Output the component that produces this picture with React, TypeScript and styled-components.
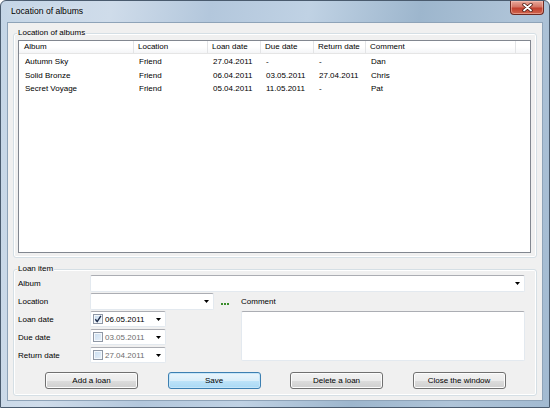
import styled, { createGlobalStyle } from 'styled-components'

const GlobalStyle = createGlobalStyle`
  html, body {
    margin: 0;
    padding: 0;
    background: #ffffff;
  }
  body {
    font-family: 'Liberation Sans', Arial, sans-serif;
    font-size: 8px;
    color: #000000;
  }
`

const Window = styled.div`
  width: 550px;
  height: 408px;
  box-sizing: border-box;
  display: flex;
  flex-direction: column;
  padding: 0 6px 6px;
  border: 1px solid #4a5b6e;
  border-radius: 6px 6px 0 0;
  background: linear-gradient(100deg, #c4d5e6 0%, #cfdcea 18%, #b3c7dc 34%, #c0d2e4 50%, #9db6cd 68%, #afc4d8 84%, #a2bad1 100%);
  overflow: hidden;
`

const TitleBar = styled.div`
  height: 21px;
  display: flex;
  justify-content: space-between;
  align-items: flex-start;
`

const Title = styled.div`
  margin-left: 4px;
  line-height: 21px;
  font-size: 8.6px;
  color: #000000;
  text-shadow: 0 0 6px rgba(255, 255, 255, 0.9);
`

const CloseButton = styled.div`
  width: 34px;
  height: 14px;
  margin-right: -1px;
  box-sizing: border-box;
  display: flex;
  align-items: center;
  justify-content: center;
  border: 1px solid #6e2a22;
  border-top: none;
  border-radius: 0 0 4px 4px;
  background: linear-gradient(#e9a99b 0%, #d47565 45%, #c2402e 55%, #d0664f 100%);
  box-shadow: inset 0 0 0 1px rgba(255, 210, 200, 0.45);
`

const Client = styled.div`
  flex: 1;
  display: flex;
  flex-direction: column;
  padding: 10px 5px 0;
  background: #f0f0f0;
  border: 1px solid #8ea3b8;
`

const GroupBox = styled.div<{ $top?: number }>`
  position: relative;
  margin-top: ${p => p.$top ?? 0}px;
  border: 1px solid #d5dfe5;
  border-radius: 3px;
  box-shadow: inset 0 0 0 1px #ffffff;
`

const Legend = styled.span`
  position: absolute;
  left: 3px;
  top: -6px;
  padding: 0 1px;
  line-height: 10px;
  background: #f0f0f0;
`

const ListGroup = styled(GroupBox)`
  padding: 6px 5px 4px 4px;
`

const ListView = styled.div`
  height: 213px;
  box-sizing: border-box;
  border: 1px solid #828790;
  background: #ffffff;
`

const columns = '115px 74px 53px 53px 52px 150px 1fr'

const HeaderRow = styled.div`
  display: grid;
  grid-template-columns: ${columns};
  height: 13px;
  box-sizing: border-box;
  border-bottom: 1px solid #e5e5e5;
  background: linear-gradient(#ffffff 0%, #ffffff 50%, #f4f5f7 100%);
`

const HeaderCell = styled.div`
  padding-left: 4px;
  line-height: 12px;
  border-right: 1px solid #e3e4e6;
  white-space: nowrap;
  &:first-child {
    padding-left: 5px;
  }
  &:last-child {
    border-right: none;
  }
`

const Rows = styled.div`
  padding-top: 1px;
`

const Row = styled.div`
  display: grid;
  grid-template-columns: ${columns};
  height: 13.5px;
  line-height: 13.5px;
`

const Cell = styled.div`
  padding-left: 5px;
  white-space: nowrap;
  &:first-child {
    padding-left: 6px;
  }
`

const FormGroup = styled(GroupBox)`
  padding: 5px 4px 5px 4px;
`

const FormGrid = styled.div`
  display: grid;
  grid-template-columns: 72px 125px 26px 284px;
  grid-template-rows: repeat(5, 17px);
  row-gap: 1px;
`

const Label = styled.div`
  display: flex;
  align-items: center;
  white-space: nowrap;
`

const Field = styled.div<{ $span?: number; $width?: number }>`
  grid-column: span ${p => p.$span ?? 1};
  width: ${p => (p.$width ? `${p.$width}px` : 'auto')};
  height: 17px;
  box-sizing: border-box;
  display: flex;
  align-items: center;
  justify-content: flex-end;
  padding-right: 4px;
  background: #ffffff;
  border: 1px solid #e3e9ef;
  border-top-color: #abadb3;
  border-radius: 2px;
`

const Arrow = () => (
  <svg width="5" height="3" viewBox="0 0 5 3">
    <polygon points="0,0 5,0 2.5,3" fill="#000000" />
  </svg>
)

const Ellipsis = styled.div`
  display: flex;
  align-items: flex-end;
  gap: 1px;
  padding: 0 0 5px 6px;
`

const Dot = styled.span`
  width: 2px;
  height: 2px;
  background: #3a8d2c;
`

const CommentBox = styled.div`
  grid-column: 4;
  grid-row: 3 / span 3;
  height: 50px;
  box-sizing: border-box;
  background: #ffffff;
  border: 1px solid #e3e9ef;
  border-top-color: #abadb3;
  border-radius: 2px;
`

const DatePicker = styled.div`
  width: 76px;
  height: 16px;
  box-sizing: border-box;
  display: flex;
  align-items: center;
  padding: 0 4px 0 2px;
  background: #ffffff;
  border: 1px solid #e3e9ef;
  border-top-color: #abadb3;
  border-radius: 2px;
`

const CheckBox = styled.span`
  width: 10px;
  height: 10px;
  box-sizing: border-box;
  display: flex;
  align-items: center;
  justify-content: center;
  border: 1px solid #8f98a6;
  background: linear-gradient(135deg, #c9ddf0 0%, #e8f1fa 100%);
  box-shadow: inset 0 0 0 1px #f4f8fc;
`

const DateText = styled.span<{ $enabled: boolean }>`
  flex: 1;
  margin-left: 2px;
  color: ${p => (p.$enabled ? '#000000' : '#6d6d6d')};
`

const ButtonRow = styled.div`
  display: flex;
  gap: 29.5px;
  margin: 7.5px 0 1px 27px;
`

const Button = styled.div<{ $default?: boolean }>`
  width: 93px;
  height: 17px;
  box-sizing: border-box;
  display: flex;
  align-items: center;
  justify-content: center;
  border: 1px solid ${p => (p.$default ? '#3c7fb1' : '#707070')};
  border-radius: 3px;
  background: ${p =>
    p.$default
      ? 'linear-gradient(#eaf5fc 0%, #d9eefa 50%, #bee3f8 51%, #a9d9f5 100%)'
      : 'linear-gradient(#f2f2f2 0%, #ebebeb 50%, #dddddd 51%, #cfcfcf 100%)'};
  box-shadow: inset 0 0 0 1px ${p => (p.$default ? '#c6e6f9' : '#fcfcfc')};
`

const albums = [
  ['Autumn Sky', 'Friend', '27.04.2011', '-', '-', 'Dan'],
  ['Solid Bronze', 'Friend', '06.04.2011', '03.05.2011', '27.04.2011', 'Chris'],
  ['Secret Voyage', 'Friend', '05.04.2011', '11.05.2011', '-', 'Pat'],
]

const headers = ['Album', 'Location', 'Loan date', 'Due date', 'Return date', 'Comment', '']

const dates = [
  { label: 'Loan date', value: '06.05.2011', checked: true },
  { label: 'Due date', value: '03.05.2011', checked: false },
  { label: 'Return date', value: '27.04.2011', checked: false },
]

const DateLabel = styled(Label)<{ $row: number }>`
  grid-column: 1;
  grid-row: ${p => p.$row};
`

const DateCell = styled.div<{ $row: number }>`
  grid-column: 2;
  grid-row: ${p => p.$row};
`

function FormDateRow({ label, value, checked, index }: { label: string; value: string; checked: boolean; index: number }) {
  const row = index + 3
  return (
    <>
      <DateLabel $row={row}>{label}</DateLabel>
      <DateCell $row={row}>
        <DatePicker>
          <CheckBox>
            {checked && (
              <svg width="8" height="8" viewBox="0 0 8 8">
                <path d="M1.3 4.2 L3.2 6.6 L6.9 0.8" stroke="#1c2b4b" strokeWidth="1.4" fill="none" />
              </svg>
            )}
          </CheckBox>
          <DateText $enabled={checked}>{value}</DateText>
          <Arrow />
        </DatePicker>
      </DateCell>
    </>
  )
}

export default function App() {
  return (
    <>
      <GlobalStyle />
      <Window>
        <TitleBar>
          <Title>Location of albums</Title>
          <CloseButton>
            <svg width="11" height="9" viewBox="0 0 11 9">
              <path d="M2 1.5 L9 7.5 M9 1.5 L2 7.5" stroke="#4a1a12" strokeWidth="3.4" strokeLinecap="round" />
              <path d="M2 1.5 L9 7.5 M9 1.5 L2 7.5" stroke="#ffffff" strokeWidth="1.8" strokeLinecap="round" />
            </svg>
          </CloseButton>
        </TitleBar>
        <Client>
          <ListGroup>
            <Legend>Location of albums</Legend>
            <ListView>
              <HeaderRow>
                {headers.map((h, i) => (
                  <HeaderCell key={i}>{h}</HeaderCell>
                ))}
              </HeaderRow>
              <Rows>
                {albums.map(row => (
                  <Row key={row[0]}>
                    {row.map((c, i) => (
                      <Cell key={i}>{c}</Cell>
                    ))}
                  </Row>
                ))}
              </Rows>
            </ListView>
          </ListGroup>

          <FormGroup $top={11}>
            <Legend>Loan item</Legend>
            <FormGrid>
              <Label>Album</Label>
              <Field $span={3}>
                <Arrow />
              </Field>

              <Label>Location</Label>
              <Field $width={124}>
                <Arrow />
              </Field>
              <Ellipsis>
                <Dot />
                <Dot />
                <Dot />
              </Ellipsis>
              <Label>Comment</Label>

              {dates.map((d, i) => (
                <FormDateRow key={d.label} index={i} {...d} />
              ))}
              <CommentBox />
            </FormGrid>
            <ButtonRow>
              <Button>Add a loan</Button>
              <Button $default>Save</Button>
              <Button>Delete a loan</Button>
              <Button>Close the window</Button>
            </ButtonRow>
          </FormGroup>
        </Client>
      </Window>
    </>
  )
}
